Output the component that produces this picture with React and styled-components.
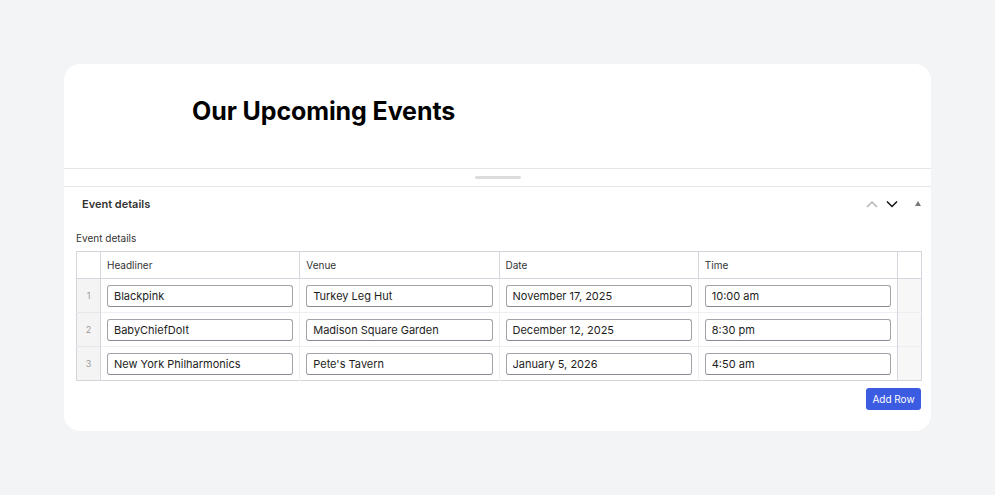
import React, { useState } from "react";
import styled, { createGlobalStyle } from "styled-components";

const GlobalStyle = createGlobalStyle`
  html, body {
    margin: 0;
    padding: 0;
    background: #f3f4f6;
    font-family: Inter, "Noto Sans", sans-serif;
    color: #111;
  }
`;

const Page = styled.div`
  padding: 64px;
`;

const Card = styled.div`
  width: 867px;
  height: 367px;
  background: #fff;
  border-radius: 16px;
  overflow: hidden;
  display: flex;
  flex-direction: column;
`;

const Hero = styled.div`
  height: 105px;
  box-sizing: border-box;
  padding: 33px 128px 0;
  border-bottom: 1px solid #e4e6ea;
`;

const Title = styled.h1`
  margin: 0;
  font-size: 25px;
  line-height: 28px;
  font-weight: 700;
  letter-spacing: -0.1px;
  color: #000;
`;

const HandleRow = styled.div`
  height: 17px;
  display: flex;
  align-items: center;
  justify-content: center;
  border-bottom: 1px solid #e4e6ea;
`;

const Handle = styled.div`
  width: 46px;
  height: 3px;
  border-radius: 2px;
  background: #dcdcdc;
`;

const PanelHeader = styled.div`
  height: 33px;
  display: flex;
  align-items: center;
  justify-content: space-between;
  padding: 0 10px 0 18px;
`;

const PanelTitle = styled.span`
  font-size: 11px;
  font-weight: 600;
  color: #333;
`;

const Controls = styled.div`
  display: flex;
  align-items: center;
  gap: 6px;
`;

const IconButton = styled.button`
  border: none;
  background: none;
  padding: 0;
  width: 14px;
  height: 14px;
  display: flex;
  align-items: center;
  justify-content: center;
  color: ${(p) => p.$color};
  cursor: pointer;
`;

const Triangle = styled.span`
  margin-left: 10px;
  width: 0;
  height: 0;
  border-left: 3px solid transparent;
  border-right: 3px solid transparent;
  border-bottom: 5px solid #777;
`;

const Body = styled.div`
  padding: 12px 9px 0 12px;
`;

const FieldLabel = styled.div`
  font-size: 10px;
  color: #333;
  line-height: 12px;
  margin-bottom: 7px;
`;

const Table = styled.table`
  width: 846px;
  border-collapse: collapse;
  table-layout: fixed;
  border: 1px solid #d3d6dd;
`;

const HeadCell = styled.th`
  height: 27px;
  box-sizing: border-box;
  text-align: left;
  font-size: 10px;
  font-weight: 400;
  color: #333;
  padding: 0 6px;
  border: 1px solid #d3d6dd;
  width: ${(p) => p.$width || "auto"};
`;

const Cell = styled.td`
  height: 34px;
  box-sizing: border-box;
  padding: 0 6px;
  border-top: 1px solid #eeeff1;
  border-left: 1px solid #eeeff1;
`;

const IndexCell = styled.td`
  height: 34px;
  box-sizing: border-box;
  text-align: center;
  font-size: 9px;
  color: #999;
  background: #f4f4f5;
  border-top: 1px solid #e6e7ea;
  border-right: 1px solid #d3d6dd;
`;

const TailCell = styled.td`
  background: #f7f7f8;
  border-left: 1px solid #d3d6dd;
  border-top: 1px solid #eeeff1;
`;

const Input = styled.input`
  width: 100%;
  height: 22px;
  box-sizing: border-box;
  border: 1px solid #a3a3ab;
  border-bottom-color: #8a8a94;
  border-radius: 3px;
  padding: 0 6px;
  font-family: Inter, "Noto Sans", sans-serif;
  font-size: 11px;
  color: #1d1d1d;
  background: #fff;
  outline: none;
`;

const Footer = styled.div`
  display: flex;
  justify-content: flex-end;
  padding-top: 7px;
  padding-right: 1px;
`;

const AddButton = styled.button`
  width: 55px;
  height: 22px;
  border: none;
  border-radius: 3px;
  background: #3b5be1;
  color: #fff;
  font-family: Inter, "Noto Sans", sans-serif;
  font-size: 10px;
  cursor: pointer;
`;

const Chevron = ({ up }) => (
  <svg width="12" height="8" viewBox="0 0 12 8" fill="none">
    <path
      d={up ? "M1 7 L6 2 L11 7" : "M1 1.5 L6 6.5 L11 1.5"}
      stroke="currentColor"
      strokeWidth="1.5"
    />
  </svg>
);

const columns = ["Headliner", "Venue", "Date", "Time"];

const initialRows = [
  ["Blackpink", "Turkey Leg Hut", "November 17, 2025", "10:00 am"],
  ["BabyChiefDoIt", "Madison Square Garden", "December 12, 2025", "8:30 pm"],
  ["New York Philharmonics", "Pete's Tavern", "January 5, 2026", "4:50 am"],
];

const App = () => {
  const [rows, setRows] = useState(initialRows);

  const updateCell = (r, c, value) => {
    setRows(rows.map((row, i) => (i === r ? row.map((v, j) => (j === c ? value : v)) : row)));
  };

  return (
    <Page>
      <GlobalStyle />
      <Card>
        <Hero>
          <Title>Our Upcoming Events</Title>
        </Hero>
        <HandleRow>
          <Handle />
        </HandleRow>
        <PanelHeader>
          <PanelTitle>Event details</PanelTitle>
          <Controls>
            <IconButton $color="#b5b5b5">
              <Chevron up />
            </IconButton>
            <IconButton $color="#111">
              <Chevron />
            </IconButton>
            <Triangle />
          </Controls>
        </PanelHeader>
        <Body>
          <FieldLabel>Event details</FieldLabel>
          <Table>
            <thead>
              <tr>
                <HeadCell $width="24px" />
                {columns.map((c) => (
                  <HeadCell key={c}>{c}</HeadCell>
                ))}
                <HeadCell $width="24px" />
              </tr>
            </thead>
            <tbody>
              {rows.map((row, r) => (
                <tr key={r}>
                  <IndexCell>{r + 1}</IndexCell>
                  {row.map((v, c) => (
                    <Cell key={c}>
                      <Input value={v} onChange={(e) => updateCell(r, c, e.target.value)} />
                    </Cell>
                  ))}
                  <TailCell />
                </tr>
              ))}
            </tbody>
          </Table>
          <Footer>
            <AddButton onClick={() => setRows([...rows, ["", "", "", ""]])}>Add Row</AddButton>
          </Footer>
        </Body>
      </Card>
    </Page>
  );
};

export default App;
